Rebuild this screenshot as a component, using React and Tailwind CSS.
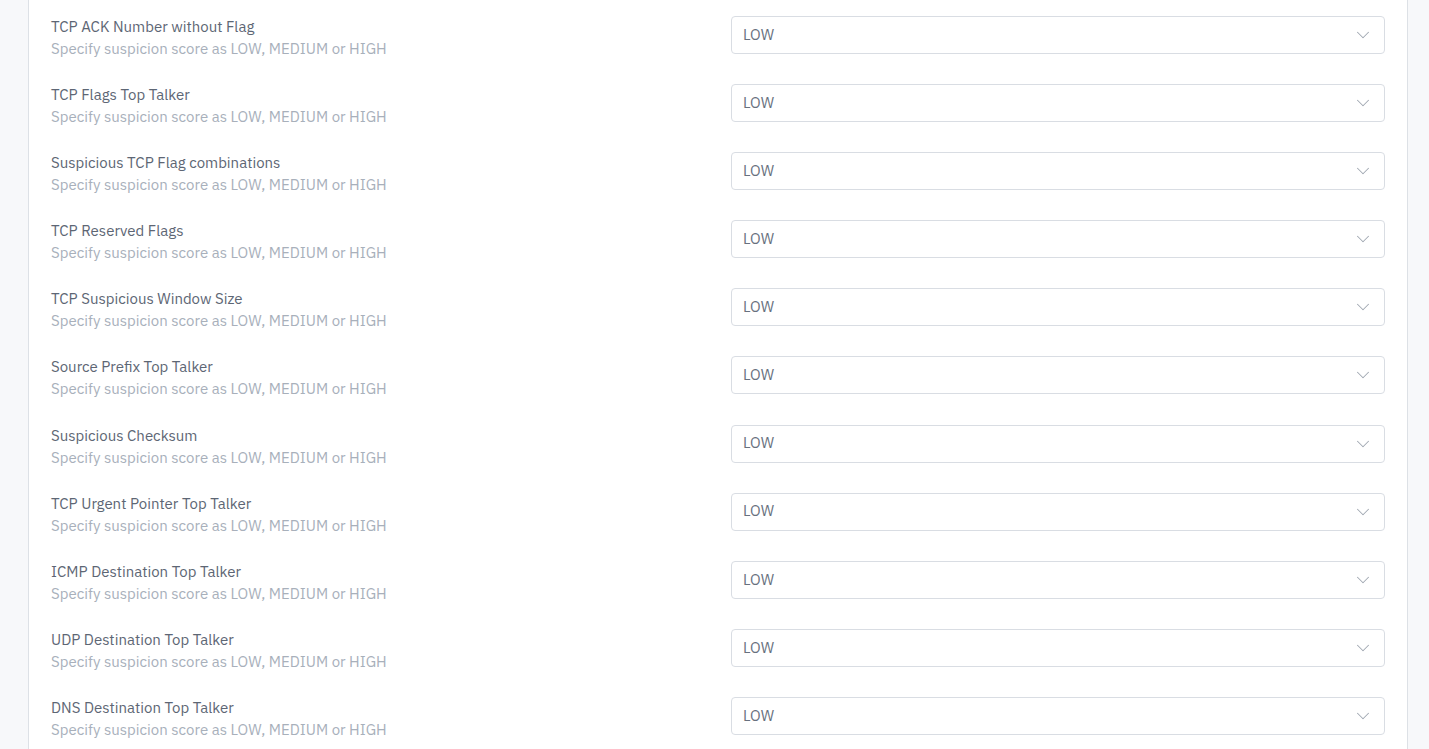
import { ChevronDown } from 'lucide-react';

const rows = [
  'TCP ACK Number without Flag',
  'TCP Flags Top Talker',
  'Suspicious TCP Flag combinations',
  'TCP Reserved Flags',
  'TCP Suspicious Window Size',
  'Source Prefix Top Talker',
  'Suspicious Checksum',
  'TCP Urgent Pointer Top Talker',
  'ICMP Destination Top Talker',
  'UDP Destination Top Talker',
  'DNS Destination Top Talker',
];

function ScoreRow({ title }) {
  return (
    <div className="flex h-[68.1px] items-start">
      <div className="flex-1">
        <div className="text-[15px] leading-[22px] text-[#5d6674]">{title}</div>
        <div className="text-[15px] leading-[22px] text-[#a8b0bb]">
          Specify suspicion score as LOW, MEDIUM or HIGH
        </div>
      </div>
      <div className="w-[654px] h-[38px] rounded-[4px] border border-[#d9dde3] bg-white flex items-center justify-between pl-[11px] pr-[10px]">
        <span className="text-[15px] text-[#68717e]">LOW</span>
        <ChevronDown className="w-[22px] h-[22px] text-[#a0a7b1]" strokeWidth={1.1} />
      </div>
    </div>
  );
}

export default function App() {
  return (
    <div
      className="h-[749px] overflow-hidden bg-[#f7f8fa] flex"
      style={{ fontFamily: '"IBM Plex Sans", "Noto Sans", "Open Sans", sans-serif' }}
    >
      <div className="ml-[28px] w-[1380px] border-x border-[#dde1e6] bg-white px-[22px] pt-[16px]">
        {rows.map((r) => (
          <ScoreRow key={r} title={r} />
        ))}
      </div>
    </div>
  );
}
